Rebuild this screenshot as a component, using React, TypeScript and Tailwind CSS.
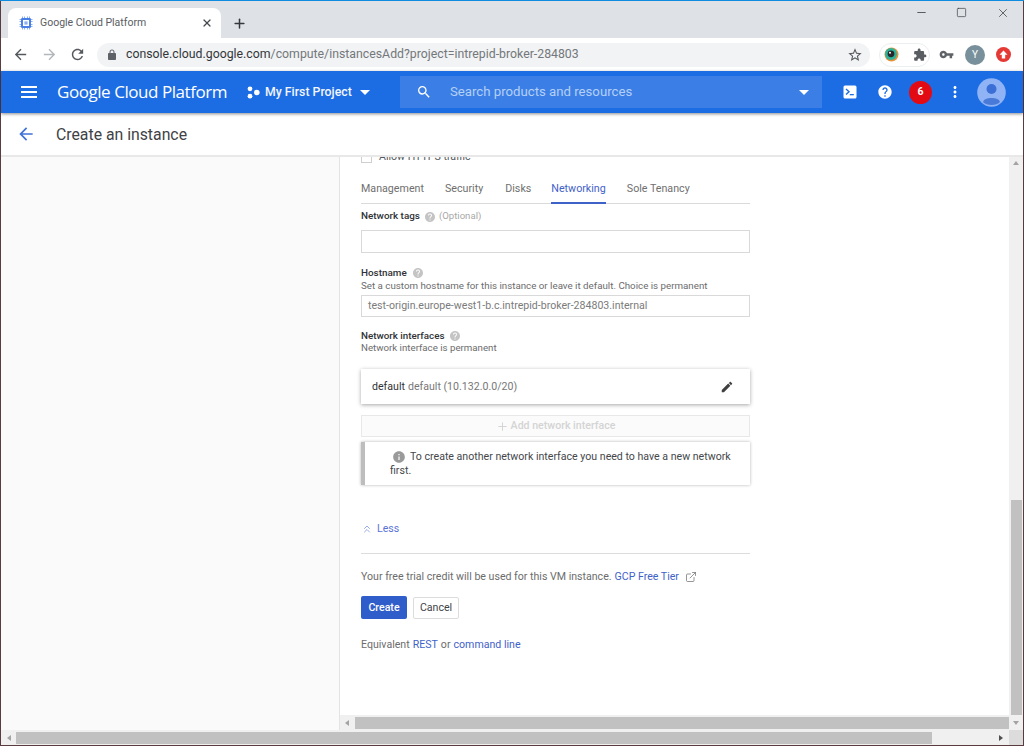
import React from "react";
import { ChevronsUp, ExternalLink, Plus, X, Minus, Square } from "lucide-react";

const I = ({ d, size = 24, color = "currentColor", className = "" }: { d: string; size?: number; color?: string; className?: string }) => (
  <svg width={size} height={size} viewBox="0 0 24 24" fill={color} className={"shrink-0 " + className}>
    <path d={d} />
  </svg>
);

const P = {
  back: "M20 11H7.83l5.59-5.59L12 4l-8 8 8 8 1.41-1.41L7.83 13H20v-2z",
  forward: "M4 11h12.17l-5.59-5.59L12 4l8 8-8 8-1.41-1.41L16.17 13H4v-2z",
  refresh: "M17.65 6.35C16.2 4.9 14.21 4 12 4c-4.42 0-7.99 3.58-7.99 8s3.57 8 7.99 8c3.73 0 6.84-2.55 7.73-6h-2.08c-.82 2.33-3.04 4-5.65 4-3.31 0-6-2.69-6-6s2.69-6 6-6c1.66 0 3.14.69 4.22 1.78L13 11h7V4l-2.35 2.35z",
  lock: "M18 8h-1V6c0-2.76-2.24-5-5-5S7 3.24 7 6v2H6c-1.1 0-2 .9-2 2v10c0 1.1.9 2 2 2h12c1.1 0 2-.9 2-2V10c0-1.1-.9-2-2-2zM9 6c0-1.66 1.34-3 3-3s3 1.34 3 3v2H9V6z",
  star: "M22 9.24l-7.19-.62L12 2 9.19 8.63 2 9.24l5.46 4.73L5.82 21 12 17.27 18.18 21l-1.63-7.03L22 9.24zM12 15.4l-3.76 2.27 1-4.28-3.32-2.88 4.38-.38L12 6.1l1.71 4.04 4.38.38-3.32 2.88 1 4.28L12 15.4z",
  ext: "M20.5 11H19V7c0-1.1-.9-2-2-2h-4V3.5C13 2.12 11.88 1 10.5 1S8 2.12 8 3.5V5H4c-1.1 0-1.99.9-1.99 2v3.8H3.5c1.49 0 2.7 1.21 2.7 2.7s-1.21 2.7-2.7 2.7H2V20c0 1.1.9 2 2 2h3.8v-1.5c0-1.49 1.21-2.7 2.7-2.7 1.49 0 2.7 1.21 2.7 2.7V22H17c1.1 0 2-.9 2-2v-4h1.5c1.38 0 2.5-1.12 2.5-2.5S21.88 11 20.5 11z",
  key: "M12.65 10C11.83 7.67 9.61 6 7 6c-3.31 0-6 2.69-6 6s2.69 6 6 6c2.61 0 4.83-1.67 5.65-4H17v4h4v-4h2v-4H12.65zM7 14c-1.1 0-2-.9-2-2s.9-2 2-2 2 .9 2 2-.9 2-2 2z",
  search: "M15.5 14h-.79l-.28-.27A6.471 6.471 0 0 0 16 9.5 6.5 6.5 0 1 0 9.5 16c1.61 0 3.09-.59 4.23-1.57l.27.28v.79l5 4.99L20.49 19l-4.99-5zm-6 0C7.01 14 5 11.99 5 9.5S7.01 5 9.5 5 14 7.01 14 9.5 11.99 14 9.5 14z",
  help: "M12 2C6.48 2 2 6.48 2 12s4.48 10 10 10 10-4.48 10-10S17.52 2 12 2zm1 17h-2v-2h2v2zm2.07-7.75l-.9.92C13.45 12.9 13 13.5 13 15h-2v-.5c0-1.1.45-2.1 1.17-2.83l1.24-1.26c.37-.36.59-.86.59-1.41 0-1.1-.9-2-2-2s-2 .9-2 2H8c0-2.21 1.79-4 4-4s4 1.79 4 4c0 .88-.36 1.68-.93 2.25z",
  edit: "M3 17.25V21h3.75L17.81 9.94l-3.75-3.75L3 17.25zM20.71 7.04c.39-.39.39-1.02 0-1.41l-2.34-2.34c-.39-.39-1.02-.39-1.41 0l-1.83 1.83 3.75 3.75 1.83-1.83z",
  info: "M12 2C6.48 2 2 6.48 2 12s4.48 10 10 10 10-4.48 10-10S17.52 2 12 2zm1 15h-2v-6h2v6zm0-8h-2V7h2v2z",
  dots: "M12 8c1.1 0 2-.9 2-2s-.9-2-2-2-2 .9-2 2 .9 2 2 2zm0 2c-1.1 0-2 .9-2 2s.9 2 2 2 2-.9 2-2-.9-2-2-2zm0 6c-1.1 0-2 .9-2 2s.9 2 2 2 2-.9 2-2-.9-2-2-2z",
};

const Caret = ({ className = "" }: { className?: string }) => (
  <span className={"block w-0 h-0 border-l-[5px] border-r-[5px] border-t-[5px] border-l-transparent border-r-transparent border-t-white " + className} />
);

const ScrollArrow = ({ dir }: { dir: "left" | "right" | "down" | "up" }) => {
  const pts = { left: "6,1 2,4 6,7", right: "2,1 6,4 2,7", down: "1,2 7,2 4,6", up: "1,6 7,6 4,2" }[dir];
  return (
    <svg width="8" height="8" viewBox="0 0 8 8" className="shrink-0">
      <polygon points={pts} fill={dir === "right" ? "#505050" : "#a3a3a3"} />
    </svg>
  );
};

export default function App() {
  return (
    <div
      className="w-[1024px] h-[746px] overflow-hidden flex flex-col bg-[#5a3b40] pl-px pr-px pb-px text-[#5f6368]"
      style={{ fontFamily: "Roboto, 'Liberation Sans', sans-serif" }}
    >
      <div className="h-px -ml-px -mr-px bg-[#0f8be0] shrink-0" />
      {/* Tab strip */}
      <div className="h-[37px] shrink-0 bg-[#dee1e6] flex items-end pl-[7px]">
        <div className="w-[213px] h-[30px] bg-white rounded-t-[8px] flex items-center pl-[11px]">
          <svg width="14" height="14" viewBox="0 0 14 14" className="shrink-0">
            <path d="M3.5 0.5V13.5M5.5 0.5V13.5M8.5 0.5V13.5M10.5 0.5V13.5M0.5 3.5H13.5M0.5 5.5H13.5M0.5 8.5H13.5M0.5 10.5H13.5" stroke="#8ab0f0" strokeWidth="1" />
            <rect x="2" y="2" width="10" height="10" rx="1.2" fill="#4a80e6" />
            <rect x="4" y="4" width="6" height="6" fill="#ffffff" />
            <rect x="5.4" y="5.4" width="3.2" height="3.2" fill="#8ab0f0" />
          </svg>
          <span className="ml-[7px] text-[10.5px] text-[#5a5d62] whitespace-nowrap">Google Cloud Platform</span>
          <X size={12} strokeWidth={2.4} className="ml-auto mr-[8px] text-[#45484c]" />
        </div>
        <Plus size={15} strokeWidth={2.4} className="ml-[11px] mb-[7px] text-[#35383c]" />
        <div className="ml-auto h-full flex items-start pt-[5px] text-[#3a3d40]">
          <Minus size={13} strokeWidth={1.5} className="mr-[28px]" />
          <Square size={11} strokeWidth={1.5} className="mr-[29px] mt-px" />
          <X size={14} strokeWidth={1.3} className="mr-[13px]" />
        </div>
      </div>
      {/* Toolbar */}
      <div className="h-[33px] shrink-0 bg-white flex items-center pl-[11px]">
        <I d={P.back} size={17} color="#55585c" />
        <I d={P.forward} size={17} color="#b4b7ba" className="ml-[12px]" />
        <I d={P.refresh} size={17} color="#55585c" className="ml-[11px]" />
        <div className="ml-[11px] w-[773px] h-[24px] rounded-full bg-[#f1f3f4] flex items-center pl-[9px]">
          <I d={P.lock} size={12} color="#5f6368" />
          <span className="ml-[8px] text-[12.3px] text-[#74777b] whitespace-nowrap">
            <span className="text-[#33363a]">console.cloud.google.com</span>/compute/instancesAdd?project=intrepid-broker-284803
          </span>
          <I d={P.star} size={16} color="#55585c" className="ml-auto mr-[7px]" />
        </div>
        <div className="ml-[9px] w-[51px] h-[24px] rounded-full border border-[#eceef0] flex items-center pl-[4px]">
          <svg width="15" height="15" viewBox="0 0 15 15" className="shrink-0">
            <circle cx="7.5" cy="7.5" r="7" fill="#e8913a" />
            <circle cx="7" cy="7" r="6" fill="#2eb39a" />
            <circle cx="7" cy="6.8" r="3.4" fill="#26292c" />
            <circle cx="6" cy="5.8" r="1" fill="#ffffff" />
          </svg>
          <I d={P.ext} size={14} color="#5a5d61" className="ml-[14px]" />
        </div>
        <I d={P.key} size={15} color="#5f6368" className="ml-[9px]" />
        <div className="ml-[11px] w-[20px] h-[20px] rounded-full bg-[#78909c] text-white text-[10px] flex items-center justify-center shrink-0">Y</div>
        <div className="ml-[11px] w-[15px] h-[15px] rounded-full bg-[#e53935] flex items-center justify-center shrink-0">
          <svg width="9" height="9" viewBox="0 0 9 9"><path d="M4.5 0.5 L8.5 4.7 H6.2 V8.5 H2.8 V4.7 H0.5 Z" fill="#ffffff" /></svg>
        </div>
      </div>
      {/* GCP bar */}
      <div className="h-[42px] shrink-0 bg-[#1c6ce4] flex items-center pl-[20px] text-white shadow-[0_1px_3px_rgba(0,0,0,0.45)] relative z-10">
        <div className="w-[16px] flex flex-col gap-[3px] shrink-0">
          <span className="h-[2px] bg-white" />
          <span className="h-[2px] bg-white" />
          <span className="h-[2px] bg-white" />
        </div>
        <span className="ml-[20px] -mt-[2px] text-[17px] leading-none whitespace-nowrap w-[170px] tracking-[-0.45px]" style={{ fontFamily: "'Open Sans', sans-serif" }}>Google Cloud Platform</span>
        <svg width="13" height="13" viewBox="0 0 13 13" className="ml-[20px] shrink-0">
          <circle cx="3" cy="2.8" r="2.4" fill="#fff" />
          <circle cx="3" cy="10.2" r="2.4" fill="#fff" />
          <circle cx="9.8" cy="6.5" r="2.8" fill="#fff" />
        </svg>
        <span className="ml-[5px] text-[12.3px] font-medium whitespace-nowrap w-[90px] text-[#f2f6fe]">My First Project</span>
        <Caret className="ml-[5px]" />
        <div className="ml-[30px] w-[422px] h-[32px] bg-[#3b7fe6] flex items-center pl-[16px]">
          <I d={P.search} size={16} color="#ffffff" />
          <span className="ml-[18px] text-[13.2px] text-[#b5cff5] whitespace-nowrap">Search products and resources</span>
          <Caret className="ml-auto mr-[13px]" />
        </div>
        <svg width="14" height="14" viewBox="0 0 14 14" className="ml-[21px] shrink-0">
          <rect x="0.5" y="0.5" width="13" height="13" rx="1.5" fill="#fff" />
          <path d="M3 4 L6 6.8 L3 9.6" stroke="#1c6ce4" strokeWidth="1.4" fill="none" />
          <rect x="6.8" y="9" width="4" height="1.3" fill="#1c6ce4" />
        </svg>
        <I d={P.help} size={16} color="#ffffff" className="ml-[20px]" />
        <div className="ml-[16px] w-[23px] h-[23px] rounded-full bg-[#e20b14] text-white text-[10.5px] font-bold flex items-center justify-center shrink-0">6</div>
        <I d={P.dots} size={18} color="#ffffff" className="ml-[14px]" />
        <svg width="29" height="29" viewBox="0 0 29 29" className="ml-[13px] shrink-0">
          <circle cx="14.5" cy="14.5" r="14.3" fill="#8fb3f5" />
          <circle cx="14.5" cy="11" r="5" fill="#3b6fd6" />
          <path d="M6 24 C7 18.5 22 18.5 23 24 C20 28 9 28 6 24 Z" fill="#4a7ad8" />
        </svg>
      </div>
      {/* Sub header */}
      <div className="h-[42px] shrink-0 bg-white flex items-center pl-[15px]">
        <I d={P.back} size={20} color="#3f72d9" />
        <span className="ml-[20px] mt-[1px] text-[15.8px] text-[#3f4246] whitespace-nowrap">Create an instance</span>
      </div>
      <div className="h-[2px] shrink-0 bg-[#e8e8e8]" />
      {/* Body */}
      <div className="flex-1 min-h-0 flex bg-white">
        <div className="w-[339px] shrink-0 bg-[#fafafa] border-r border-[#e4e4e4]" />
        <div className="flex-1 min-w-0 flex flex-col">
          <div className="flex-1 min-h-0 overflow-hidden pl-[21px]">
            <div className="w-[389px] -mt-[5px] text-[10.6px]">
              <div className="h-[10px] flex items-center">
                <span className="w-[11px] h-[11px] border border-[#cfcfcf] shrink-0" />
                <span className="ml-[7px] text-[#55585c] whitespace-nowrap">Allow HTTPS traffic</span>
              </div>
              {/* Tabs */}
              <div className="mt-[14px] h-[28px] flex items-start border-b border-[#dadada] text-[10.7px] text-[#6f6f6f]">
                <span className="pt-[5px]">Management</span>
                <span className="ml-[21px] pt-[5px]">Security</span>
                <span className="ml-[22px] pt-[5px]">Disks</span>
                <span className="ml-[20px] pt-[5px] h-[28px] border-b-2 border-[#3f62c9] text-[#3f62c9]">Networking</span>
                <span className="ml-[21px] pt-[5px]">Sole Tenancy</span>
              </div>
              <div className="mt-[6px] h-[13px] flex items-center">
                <span className="font-medium text-[9.9px] text-[#2f3236]">Network tags</span>
                <I d={P.help} size={12} color="#c4c4c4" className="ml-[4px]" />
                <span className="ml-[3px] text-[9.6px] text-[#a8a8a8]">(Optional)</span>
              </div>
              <div className="mt-[7px] h-[23px] border border-[#d9d9d9] bg-white" />
              <div className="mt-[14px] h-[12px] flex items-center">
                <span className="font-medium text-[9.9px] text-[#2f3236]">Hostname</span>
                <I d={P.help} size={12} color="#c4c4c4" className="ml-[5px]" />
              </div>
              <div className="h-[13px] leading-[13px] text-[9.75px] text-[#6c6c6c] whitespace-nowrap">Set a custom hostname for this instance or leave it default. Choice is permanent</div>
              <div className="mt-[3px] h-[22px] border border-[#d9d9d9] flex items-center pl-[6px] text-[#7b7b7b] whitespace-nowrap">test-origin.europe-west1-b.c.intrepid-broker-284803.internal</div>
              <div className="mt-[13px] h-[12px] flex items-center">
                <span className="font-medium text-[9.8px] text-[#2f3236]">Network interfaces</span>
                <I d={P.help} size={12} color="#c4c4c4" className="ml-[5px]" />
              </div>
              <div className="h-[12px] leading-[12px] text-[9.7px] text-[#6c6c6c]">Network interface is permanent</div>
              {/* Card */}
              <div className="mt-[15px] h-[35px] bg-white shadow-[0_1px_4px_rgba(0,0,0,0.35)] flex items-center pl-[11px] pr-[16px]">
                <span className="text-[#303236]">default</span>
                <span className="ml-[3px] text-[#777]">default (10.132.0.0/20)</span>
                <I d={P.edit} size={14} color="#404040" className="ml-auto" />
              </div>
              <div className="mt-[11px] h-[22px] border border-[#e8e8e8] bg-[#fbfbfb] flex items-center justify-center text-[#d4d4d4] font-medium">
                <Plus size={13} strokeWidth={1.8} className="mr-[2px]" />
                Add network interface
              </div>
              <div className="mt-[5px] h-[43px] border-l-[4px] border-[#bdbdbd] bg-white shadow-[0_0_3px_rgba(0,0,0,0.3)] pl-[25px] pr-[16px] pt-[8px] leading-[14px] text-[#44474b]">
                <span className="inline-flex align-top items-center">
                  <span className="ml-[2px] mr-[4px]"><I d={P.info} size={14} color="#9a9a9a" /></span>
                </span>
                To create another network interface you need to have a new network first.
              </div>
              <div className="mt-[37px] h-[14px] flex items-center text-[#5a72d8]">
                <ChevronsUp size={12} strokeWidth={1.8} className="mr-[4px] text-[#8da0e0]" />
                Less
              </div>
              <div className="mt-[17px] h-px bg-[#dcdcdc]" />
              <div className="mt-[16px] h-[13px] flex items-center text-[#6c6c6c] whitespace-nowrap">
                Your free trial credit will be used for this VM instance.<span className="ml-[3px] text-[#3f62c9]">GCP Free Tier</span>
                <ExternalLink size={12} strokeWidth={1.3} className="ml-[6px] text-[#5c5c5c]" />
              </div>
              <div className="mt-[13px] flex items-center">
                <div className="w-[46px] h-[23px] rounded-[2px] bg-[#2f5ecb] text-white font-medium flex items-center justify-center">Create</div>
                <div className="ml-[6px] w-[46px] h-[22px] rounded-[2px] border border-[#dcdcdc] bg-white text-[#404347] flex items-center justify-center">Cancel</div>
              </div>
              <div className="mt-[19px] h-[13px] flex items-center text-[#6c6c6c] whitespace-nowrap">
                Equivalent<span className="ml-[3px] text-[#3f62c9]">REST</span><span className="ml-[3px]">or</span><span className="ml-[3px] text-[#3f62c9]">command line</span>
              </div>
            </div>
          </div>
          {/* Inner horizontal scrollbar */}
          <div className="h-[15px] shrink-0 bg-[#f0f0f0] flex items-center pl-[3px]">
            <ScrollArrow dir="left" />
            <div className="ml-[4px] flex-1 h-[12px] bg-[#c1c1c1]" />
          </div>
        </div>
        {/* Vertical scrollbar */}
        <div className="w-[14px] shrink-0 bg-[#f0f0f0] flex flex-col items-center">
          <div className="h-[11px] flex items-center shrink-0"><ScrollArrow dir="up" /></div>
          <div className="flex-1" />
          <div className="w-[11px] h-[215px] shrink-0 bg-[#c1c1c1]" />
          <div className="h-[15px] flex items-center shrink-0"><ScrollArrow dir="down" /></div>
        </div>
      </div>
      {/* Outer horizontal scrollbar */}
      <div className="h-[15px] shrink-0 bg-[#f0f0f0] flex items-center pl-[4px]">
        <ScrollArrow dir="left" />
        <div className="ml-[3px] w-[916px] h-[12px] bg-[#c1c1c1]" />
        <div className="flex-1 flex justify-end pr-[4px]"><ScrollArrow dir="right" /></div>
        <div className="w-[14px] h-full bg-[#dcdcdc]" />
      </div>
    </div>
  );
}
